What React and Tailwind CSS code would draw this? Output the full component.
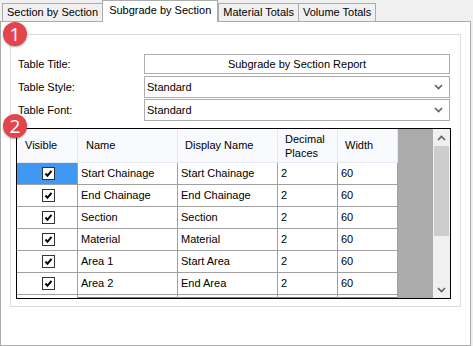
import React from 'react';

const rows = [
  { name: 'Start Chainage', display: 'Start Chainage', dec: '2', width: '60' },
  { name: 'End Chainage', display: 'End Chainage', dec: '2', width: '60' },
  { name: 'Section', display: 'Section', dec: '2', width: '60' },
  { name: 'Material', display: 'Material', dec: '2', width: '60' },
  { name: 'Area 1', display: 'Start Area', dec: '2', width: '60' },
  { name: 'Area 2', display: 'End Area', dec: '2', width: '60' },
  { name: '', display: '', dec: '', width: '', partial: true },
];

const tabs = ['Section by Section', 'Subgrade by Section', 'Material Totals', 'Volume Totals'];

const Chevron = ({ up }) => (
  <svg width="9" height="6" viewBox="0 0 9 6" className={up ? 'rotate-180' : ''}>
    <path d="M1 1 L4.5 4.5 L8 1" fill="none" stroke="#606060" strokeWidth="1.6" />
  </svg>
);

const Badge = ({ n, className }) => (
  <div
    className={`absolute w-[24px] h-[24px] rounded-full bg-[#e2464c] text-white flex items-center justify-center text-[19px] leading-none shadow-[0_1px_2px_rgba(0,0,0,0.35)] font-['Open_Sans',sans-serif] ${className}`}
  >
    {n}
  </div>
);

const Checkbox = () => (
  <div className="w-[13px] h-[13px] border border-[#333] bg-white flex items-center justify-center">
    <svg width="9" height="9" viewBox="0 0 9 9">
      <path d="M1.5 4.5 L3.5 6.8 L7.5 1.8" fill="none" stroke="#000" strokeWidth="2" />
    </svg>
  </div>
);

const App = () => {
  return (
    <div className="relative w-[473px] h-[346px] bg-[#f0f0f0] overflow-hidden text-[11px] text-black font-['Liberation_Sans',Arial,sans-serif]">
      {/* tab strip */}
      <div className="flex items-end h-[21px] pl-[2px]">
        {tabs.map((t, i) =>
          i === 1 ? (
            <div
              key={t}
              className="relative z-10 h-[22px] -mb-px -ml-px px-[6px] bg-white border border-[#acacac] border-b-0 flex items-center"
            >
              <span className="-mt-[2px]">{t}</span>
            </div>
          ) : (
            <div
              key={t}
              className={`h-[18px] px-[4px] bg-[#f0f0f0] border border-[#acacac] border-b-0 flex items-center ${i > 2 ? '-ml-px' : ''}`}
            >
              {t}
            </div>
          )
        )}
      </div>

      {/* panel */}
      <div className="w-[471px] h-[325px] bg-white border border-[#acacac] pt-[12px] pl-[9px]">
        <div className="w-[451px] h-[273px] border border-[#dcdcdc] pt-[19px] pl-[7px]">
          <div className="flex items-center h-[20px]">
            <div className="w-[126px]">Table Title:</div>
            <div className="w-[306px] h-[20px] border border-[#adadad] flex items-center justify-center">
              Subgrade by Section Report
            </div>
          </div>
          <div className="flex items-center h-[22px] mt-[2px]">
            <div className="w-[126px]">Table Style:</div>
            <div className="w-[306px] h-[22px] border border-[#adadad] flex items-center justify-between pl-[2px] pr-[6px]">
              <span>Standard</span>
              <Chevron />
            </div>
          </div>
          <div className="flex items-center h-[22px] mt-[1px]">
            <div className="w-[126px]">Table Font:</div>
            <div className="w-[306px] h-[22px] border border-[#adadad] flex items-center justify-between pl-[2px] pr-[6px]">
              <span>Standard</span>
              <Chevron />
            </div>
          </div>

          {/* grid */}
          <div className="mt-[7px] -ml-[2px] w-[435px] h-[171px] border border-black shadow-[inset_1px_0_0_#7a7a7a,inset_0_-1px_0_#7a7a7a] flex overflow-hidden">
            <div className="w-[381px] flex flex-col">
              <div className="flex h-[34px] bg-[#f8fafd] border-b border-[#e3eaf5] shrink-0">
                <div className="w-[61px] border-r border-[#e3eaf5] pl-[8px] flex items-center">Visible</div>
                <div className="w-[100px] border-r border-[#e3eaf5] pl-[8px] flex items-center">Name</div>
                <div className="w-[100px] border-r border-[#e3eaf5] pl-[7px] flex items-center">Display Name</div>
                <div className="w-[60px] border-r border-[#e3eaf5] pl-[7px] flex items-center leading-[14px]">
                  Decimal
                  <br />
                  Places
                </div>
                <div className="w-[60px] border-r border-[#e3eaf5] pl-[7px] flex items-center">Width</div>
              </div>
              {rows.map((r, i) => (
                <div key={i} className="flex h-[22px] border-b border-[#a0a0a0] shrink-0">
                  <div
                    className={`w-[61px] border-r border-[#a0a0a0] flex items-center justify-center pl-[2px] ${i === 0 ? 'bg-[#3f99f4]' : 'bg-white'}`}
                  >
                    {!r.partial && <Checkbox />}
                  </div>
                  <div className="w-[100px] border-r border-[#a0a0a0] pl-[3px] flex items-center">{r.name}</div>
                  <div className="w-[100px] border-r border-[#a0a0a0] pl-[3px] flex items-center">{r.display}</div>
                  <div className="w-[60px] border-r border-[#a0a0a0] pl-[3px] flex items-center">{r.dec}</div>
                  <div className="w-[60px] border-r border-[#a0a0a0] pl-[3px] flex items-center">{r.width}</div>
                </div>
              ))}
            </div>
            <div className="w-[35px] bg-[#ababab]" />
            {/* scrollbar */}
            <div className="w-[17px] bg-[#f0f0f0] flex flex-col">
              <div className="h-[17px] flex items-center justify-center">
                <Chevron up />
              </div>
              <div className="h-[90px] mx-px bg-[#cdcdcd]" />
              <div className="flex-1" />
              <div className="h-[17px] flex items-center justify-center">
                <Chevron />
              </div>
            </div>
          </div>
        </div>
      </div>

      <Badge n="1" className="left-[3px] top-[22px]" />
      <Badge n="2" className="left-[3px] top-[114px]" />
    </div>
  );
};

export default App;
